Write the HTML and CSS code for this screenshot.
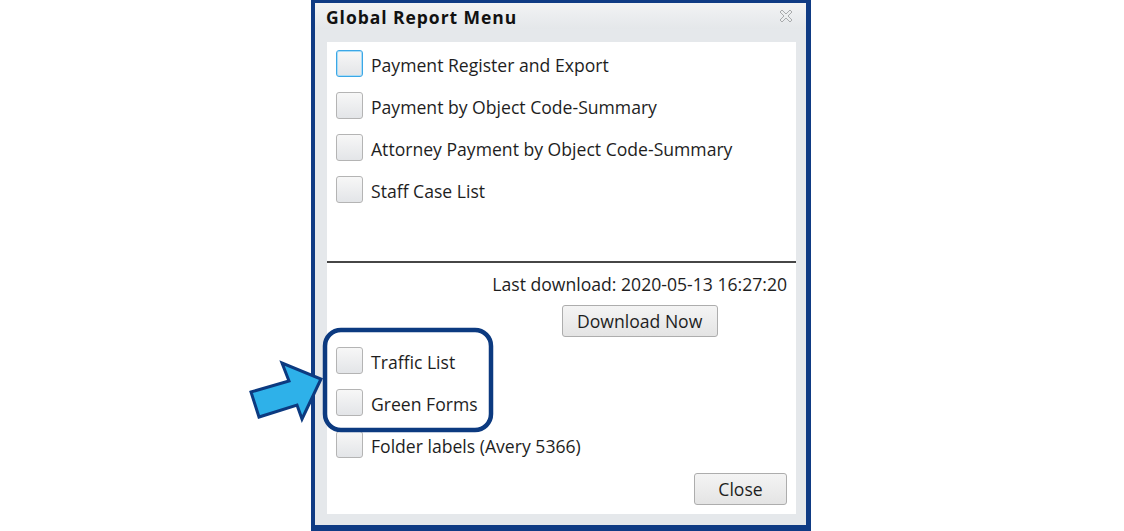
FILE: index.html
```html
<!DOCTYPE html>
<html lang="en">
<head>
  <meta charset="UTF-8">
  <title>Global Report Menu</title>
  <link rel="stylesheet" href="styles.css">
</head>
<body>
  <div class="dialog">
    <div class="titlebar">
      <span class="title">Global Report Menu</span>
      <svg class="close-x" width="14" height="14" viewBox="0 0 14 14">
        <polygon points="1,3 3,1 7,5 11,1 13,3 9,7 13,11 11,13 7,9 3,13 1,11 5,7" fill="#eceeef" stroke="#a9abad" stroke-width="1"/>
      </svg>
    </div>

    <div class="panel">
      <div class="reports">
        <label class="row"><span class="check focused"></span><span class="text">Payment Register and Export</span></label>
        <label class="row"><span class="check"></span><span class="text">Payment by Object Code-Summary</span></label>
        <label class="row"><span class="check"></span><span class="text">Attorney Payment by Object Code-Summary</span></label>
        <label class="row"><span class="check"></span><span class="text">Staff Case List</span></label>
      </div>

      <hr class="sep">

      <div class="download">
        <div class="download-col">
          <div class="last">Last download: 2020-05-13 16:27:20</div>
          <button class="btn btn-download">Download Now</button>
        </div>
      </div>

      <div class="reports lower">
        <label class="row"><span class="check"></span><span class="text">Traffic List</span></label>
        <label class="row"><span class="check"></span><span class="text">Green Forms</span></label>
        <label class="row"><span class="check"></span><span class="text">Folder labels (Avery 5366)</span></label>
      </div>

      <div class="footer">
        <button class="btn btn-close">Close</button>
      </div>
    </div>
  </div>

  <!-- callout drawn over the dialog -->
  <svg class="callout" width="1124" height="531" viewBox="0 0 1124 531">
    <rect x="325" y="330" width="166" height="100" rx="16" ry="16" fill="none" stroke="#0c3a80" stroke-width="4.5"/>
    <polygon points="251,392 289,381 282,363 321,379 302,419 297,405 259,417" fill="#2eb1e9" stroke="#0c3a80" stroke-width="3" stroke-linejoin="miter"/>
  </svg>
</body>
</html>
```

FILE: styles.css
```css
body {
  margin: 0;
  background: #ffffff;
  font-family: "Open Sans", "Noto Sans", sans-serif;
  color: #1e1e1e;
  position: relative;
  width: 1124px;
  height: 531px;
  overflow: hidden;
}
.dialog {
  margin-left: 311px;
  width: 500px;
  height: 531px;
  box-sizing: border-box;
  background: #e5e8eb;
  border-style: solid;
  border-color: #0f3b84;
  border-width: 3px 5px 6px 4px;
  display: flex;
  flex-direction: column;
}
.titlebar {
  height: 26px;
  flex: none;
  display: flex;
  align-items: center;
  justify-content: space-between;
  padding: 0 13px 0 11px;
  background: linear-gradient(#f2f3f4, #e4e7ea);
}
.title {
  font-weight: bold;
  font-size: 17.5px;
  letter-spacing: 0.95px;
  color: #111;
  padding-top: 2px;
}
.close-x {
  display: block;
}
.panel {
  flex: 1;
  margin: 13px 10px 11px 12px;
  background: #ffffff;
  display: flex;
  flex-direction: column;
}
.reports {
  display: flex;
  flex-direction: column;
  gap: 15px;
  padding: 8px 0 0 9px;
}
.row {
  display: flex;
  align-items: center;
  gap: 8px;
  font-size: 17.6px;
  height: 27px;
}
.text {
  padding-top: 3px;
}
.check {
  width: 25px;
  height: 25px;
  flex: none;
  border: 1px solid #b4b4b4;
  border-radius: 3px;
  background: linear-gradient(#f7f7f7, #e3e5e8);
}
.check.focused {
  border-color: #3ba7e6;
  box-shadow: inset 0 0 0 1px #aadcf6;
}
.sep {
  margin: 58px 0 0 0;
  border: none;
  height: 2px;
  background: #464646;
}
.download {
  display: flex;
  justify-content: flex-end;
  padding: 10px 9px 0 0;
}
.download-col {
  display: flex;
  flex-direction: column;
  align-items: center;
  gap: 10px;
}
.last {
  font-size: 17.6px;
  line-height: 22px;
}
.btn {
  font-family: "Open Sans", "Noto Sans", sans-serif;
  font-size: 17.6px;
  color: #1e1e1e;
  height: 32px;
  padding: 0;
  border: 1px solid #adadad;
  border-radius: 3px;
  background: linear-gradient(#f4f4f4, #e4e4e4);
}
.btn-download {
  width: 156px;
}
.reports.lower {
  padding-top: 10px;
}
.footer {
  display: flex;
  justify-content: flex-end;
  padding: 15px 9px 0 0;
}
.btn-close {
  width: 93px;
}
.callout {
  position: absolute;
  left: 0;
  top: 0;
  pointer-events: none;
}
```
